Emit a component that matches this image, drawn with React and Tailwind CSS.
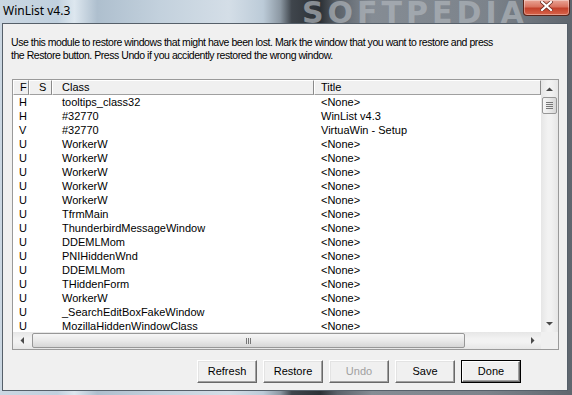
import React from "react";

const rows = [
  ["H", "tooltips_class32", "<None>"],
  ["H", "#32770", "WinList v4.3"],
  ["V", "#32770", "VirtuaWin - Setup"],
  ["U", "WorkerW", "<None>"],
  ["U", "WorkerW", "<None>"],
  ["U", "WorkerW", "<None>"],
  ["U", "WorkerW", "<None>"],
  ["U", "WorkerW", "<None>"],
  ["U", "TfrmMain", "<None>"],
  ["U", "ThunderbirdMessageWindow", "<None>"],
  ["U", "DDEMLMom", "<None>"],
  ["U", "PNIHiddenWnd", "<None>"],
  ["U", "DDEMLMom", "<None>"],
  ["U", "THiddenForm", "<None>"],
  ["U", "WorkerW", "<None>"],
  ["U", "_SearchEditBoxFakeWindow", "<None>"],
  ["U", "MozillaHiddenWindowClass", "<None>"],
];

function Arrow({ dir }) {
  const paths = {
    up: "M0 4 L3.5 0.5 L7 4 Z",
    down: "M0 0 L3.5 3.5 L7 0 Z",
    left: "M4 0 L0.5 3.5 L4 7 Z",
    right: "M0 0 L3.5 3.5 L0 7 Z",
  };
  const v = dir === "up" || dir === "down";
  return (
    <svg width={v ? 7 : 4} height={v ? 4 : 7} viewBox={v ? "0 0 7 4" : "0 0 4 7"}>
      <path d={paths[dir]} fill="#4a4a4a" />
    </svg>
  );
}

function Btn({ children, disabled }) {
  return (
    <div
      className={`w-[60px] h-[23px] flex items-center justify-center bg-[#f0f0f0] border border-t-white border-l-white border-r-[#696969] border-b-[#696969] shadow-[inset_-1px_-1px_0_#a0a0a0,inset_1px_1px_0_#e3e3e3] ${
        disabled ? "text-[#a0a0a0]" : "text-black"
      }`}
    >
      {children}
    </div>
  );
}

function DefBtn({ children }) {
  return (
    <div className="w-[60px] h-[23px] border border-black flex">
      <div className="flex-1 flex items-center justify-center bg-[#f0f0f0] border border-t-white border-l-white border-r-[#696969] border-b-[#696969] shadow-[inset_-1px_-1px_0_#a0a0a0]">
        {children}
      </div>
    </div>
  );
}

export default function App() {
  return (
    <div className="w-[572px] h-[395px] flex flex-col overflow-hidden bg-[linear-gradient(90deg,#cbd7e2_0%,#c0d0de_10%,#dde7ef_13%,#aebfce_17%,#c3d1dd_28%,#d4dee7_40%,#bccbd8_46%,#8c98a3_49%,#3f454c_51%,#2c3136_56%,#5b626a_59%,#858c94_65%,#7c838b_85%,#5f666e_100%)] font-['Liberation_Sans',Arial,sans-serif] text-[11px] text-black">
      {/* Title bar */}
      <div className="h-[23px] flex justify-between items-start relative shrink-0 overflow-hidden">
        <span className="pl-[3px] pt-[2px] text-[12px] leading-[18px] font-['Noto_Sans',sans-serif] text-black">
          WinList v4.3
        </span>
        <span className="absolute left-[302px] top-[-2px] text-[30px] leading-[30px] font-bold tracking-[4px] font-['DejaVu_Sans',sans-serif] text-[#aeb4ba] opacity-70 select-none whitespace-nowrap">
          SOFTPEDIA
        </span>
        <div className="relative mr-[2px] w-[47px] h-[16px] rounded-b-[4px] border border-t-0 border-[#5b2419] bg-[linear-gradient(180deg,#e9a596_0%,#d9735f_45%,#c3412b_55%,#d8654b_100%)] shadow-[inset_0_0_0_1px_rgba(255,255,255,0.35)] flex items-center justify-center">
          <svg width="13" height="10" viewBox="0 0 13 10" className="-mt-[3px]">
            <path d="M2 1 L11 9 M11 1 L2 9" stroke="#6b2a1e" strokeWidth="3.6" strokeLinecap="square" />
            <path d="M2 1 L11 9 M11 1 L2 9" stroke="#ffffff" strokeWidth="2.2" strokeLinecap="square" />
          </svg>
        </div>
      </div>

      {/* Frame + client */}
      <div className="flex-1 flex pl-[2px] pr-[4px] pb-[4px] min-h-0">
        <div className="flex-1 border border-[#56606a] bg-[#f0f0f0] flex flex-col min-h-0">
          <p className="pl-[8px] pt-[12px] leading-[13px] text-[10.5px] tracking-[-0.45px] whitespace-nowrap">
            Use this module to restore windows that might have been lost. Mark the window that you want to restore and press
            <br />
            the Restore button. Press Undo if you accidently restored the wrong window.
          </p>

          {/* List view */}
          <div className="mt-[17px] ml-[9px] w-[547px] h-[271px] border border-[#9a9a9a] bg-white flex flex-col shrink-0">
            <div className="flex flex-1 min-h-0">
              <div className="flex-1 flex flex-col min-w-0 overflow-hidden">
                {/* Header */}
                <div className="h-[15px] flex shrink-0 leading-[13px]">
                  <div className="w-[16px] pl-[6px] bg-[#f0f0f0] border border-t-white border-l-white border-r-[#8a8a8a] border-b-[#a0a0a0]">F</div>
                  <div className="w-[23px] pl-[9px] bg-[#f0f0f0] border border-t-white border-l-white border-r-[#8a8a8a] border-b-[#a0a0a0]">S</div>
                  <div className="w-[262px] pl-[9px] bg-[#f0f0f0] border border-t-white border-l-white border-r-[#8a8a8a] border-b-[#a0a0a0]">Class</div>
                  <div className="flex-1 pl-[6px] bg-[#f0f0f0] border border-t-white border-l-white border-r-[#8a8a8a] border-b-[#a0a0a0]">Title</div>
                </div>
                {/* Rows */}
                <div className="flex-1 overflow-hidden">
                  {rows.map((r, i) => (
                    <div key={i} className="h-[14px] flex leading-[14px] whitespace-nowrap">
                      <div className="w-[16px] pl-[6px]">{r[0]}</div>
                      <div className="w-[23px]"></div>
                      <div className="w-[262px] pl-[10px]">{r[1]}</div>
                      <div className="flex-1 pl-[7px]">{r[2]}</div>
                    </div>
                  ))}
                </div>
              </div>
              {/* Vertical scrollbar */}
              <div className="w-[17px] flex flex-col bg-[linear-gradient(90deg,#e6e6e6,#f2f2f2_40%,#f2f2f2_60%,#e6e6e6)]">
                <div className="h-[17px] flex items-center justify-center shrink-0">
                  <Arrow dir="up" />
                </div>
                <div className="h-[17px] mx-[1px] rounded-[2px] border border-[#979797] bg-[linear-gradient(90deg,#f6f6f6,#e9e9e9_50%,#d6d6d6)] flex flex-col items-center justify-center gap-[1px] shrink-0">
                  <div className="w-[7px] h-[1px] bg-[#777]" />
                  <div className="w-[7px] h-[1px] bg-[#777]" />
                  <div className="w-[7px] h-[1px] bg-[#777]" />
                  <div className="w-[7px] h-[1px] bg-[#777]" />
                </div>
                <div className="flex-1" />
                <div className="h-[17px] flex items-center justify-center shrink-0">
                  <Arrow dir="down" />
                </div>
              </div>
            </div>
            {/* Horizontal scrollbar */}
            <div className="h-[17px] flex shrink-0">
              <div className="flex-1 flex bg-[linear-gradient(180deg,#e6e6e6,#f2f2f2_40%,#f2f2f2_60%,#e6e6e6)]">
                <div className="w-[17px] flex items-center justify-center shrink-0">
                  <Arrow dir="left" />
                </div>
                <div className="w-[433px] my-[1px] ml-[2px] rounded-[2px] border border-[#979797] bg-[linear-gradient(180deg,#f6f6f6,#e9e9e9_50%,#d6d6d6)] flex items-center justify-center gap-[1px]">
                  <div className="w-[1px] h-[6px] bg-[#777]" />
                  <div className="w-[1px] h-[6px] bg-[#777]" />
                  <div className="w-[1px] h-[6px] bg-[#777]" />
                </div>
                <div className="flex-1" />
                <div className="w-[17px] flex items-center justify-center shrink-0">
                  <Arrow dir="right" />
                </div>
              </div>
              <div className="w-[17px] bg-[#f0f0f0]" />
            </div>
          </div>

          {/* Buttons */}
          <div className="mt-[10px] flex justify-end gap-[6px] pr-[46px]">
            <Btn>Refresh</Btn>
            <Btn>Restore</Btn>
            <Btn disabled>Undo</Btn>
            <Btn>Save</Btn>
            <DefBtn>Done</DefBtn>
          </div>
        </div>
      </div>
    </div>
  );
}
